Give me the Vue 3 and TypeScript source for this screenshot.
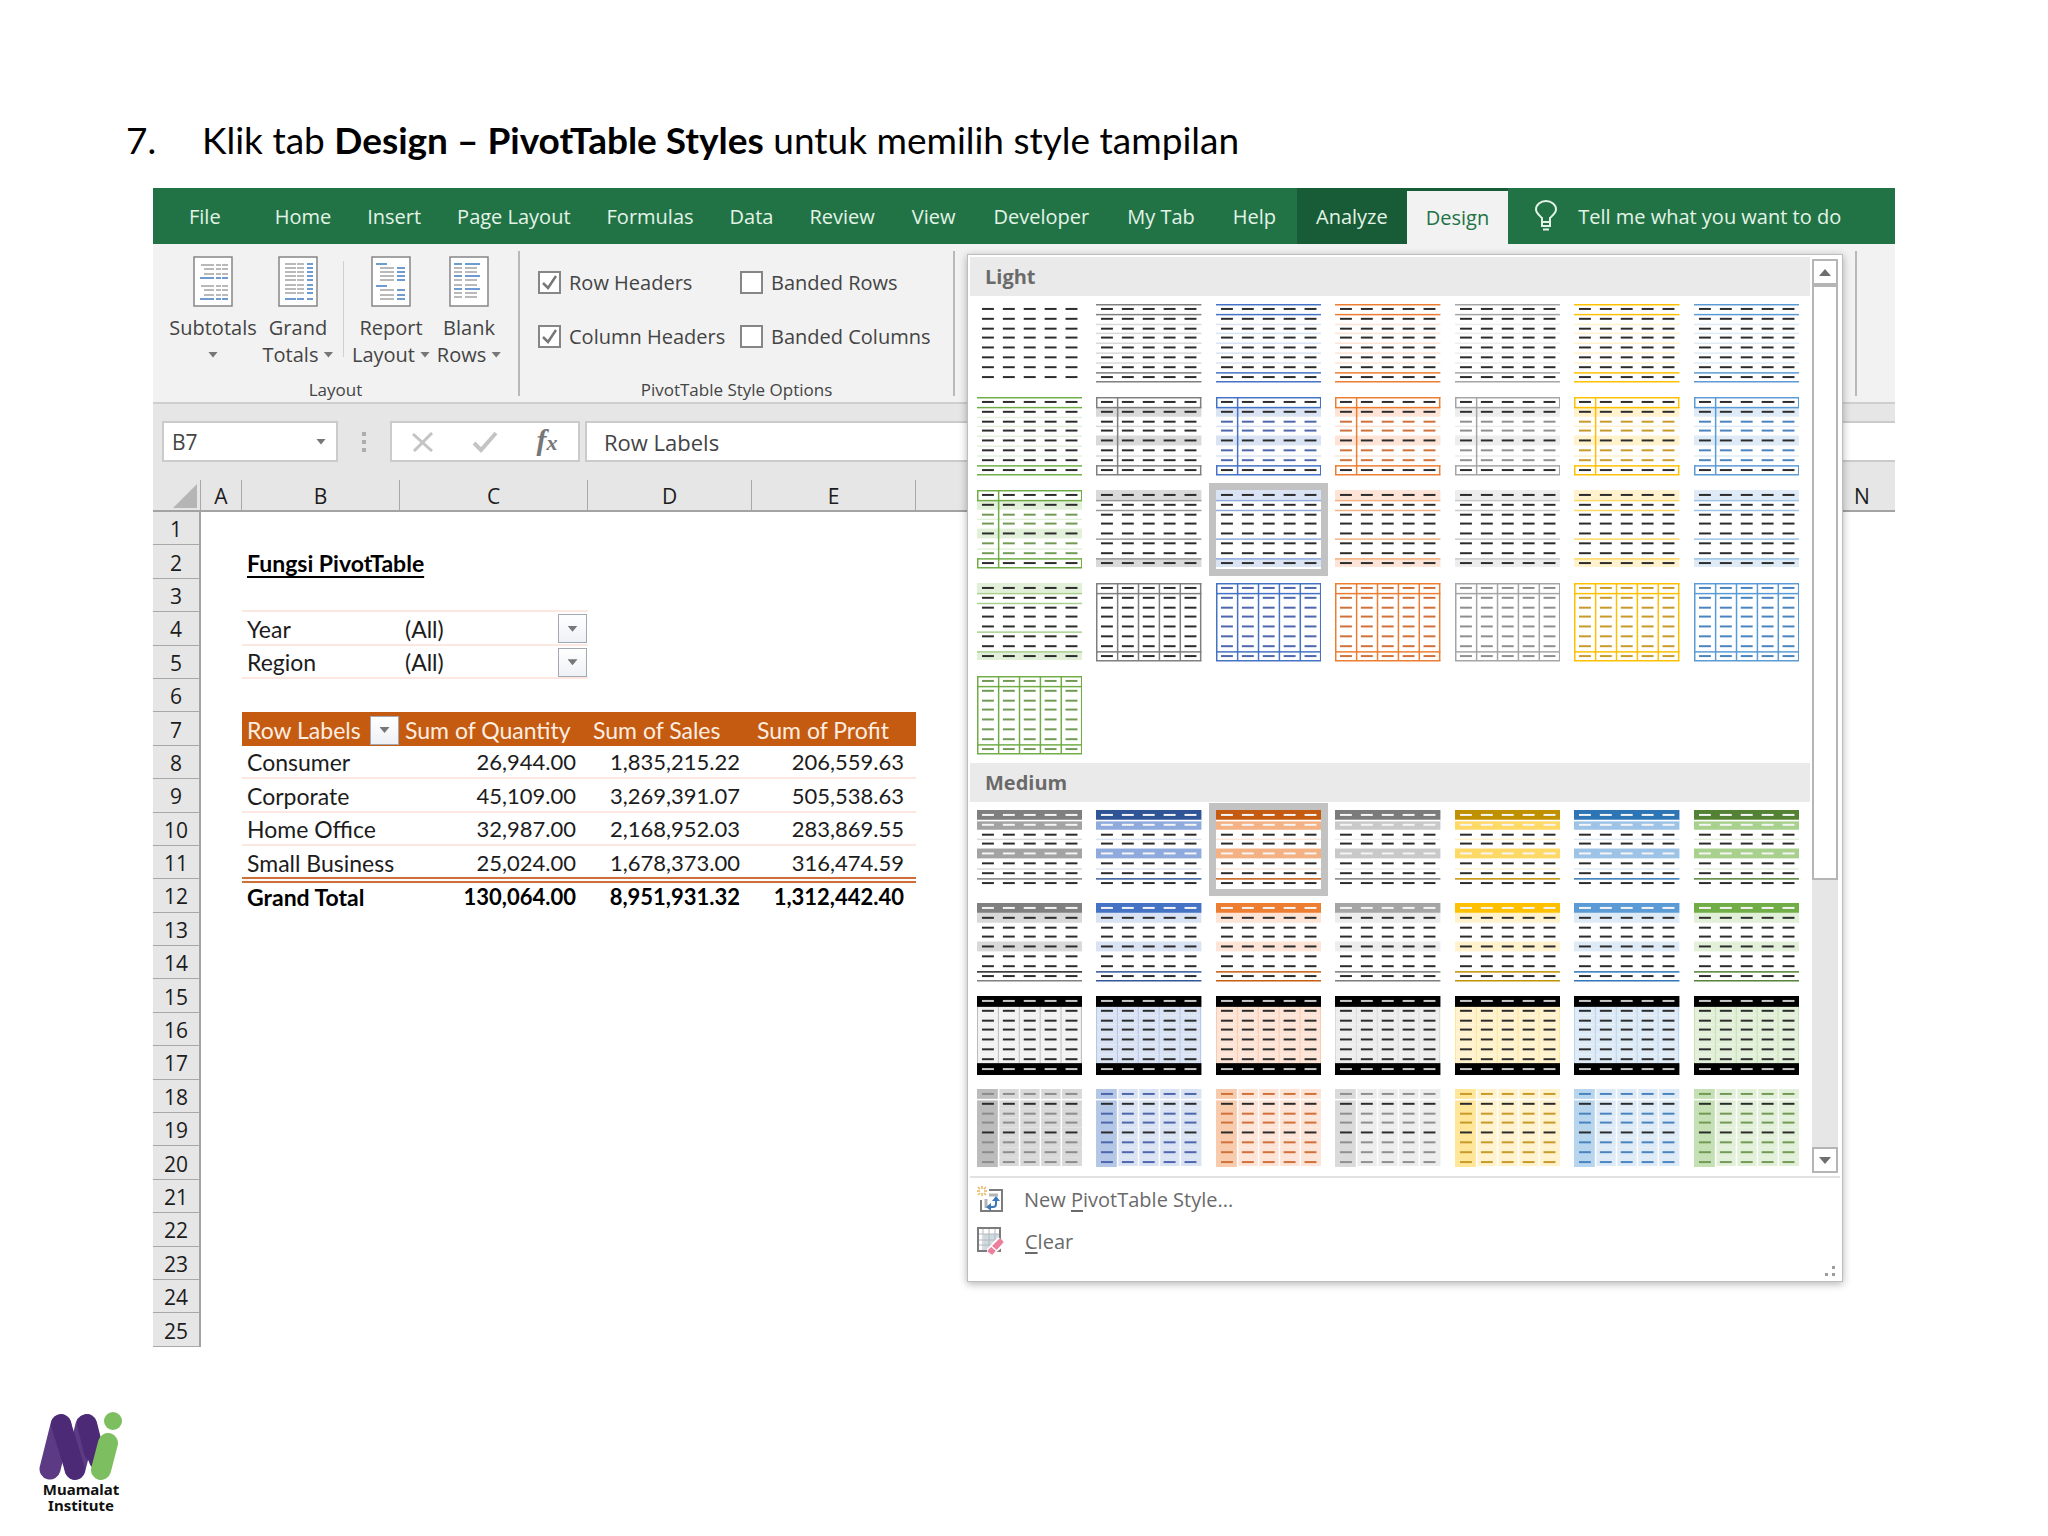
<script setup lang="ts">
import { ref } from 'vue'

interface Palette {
  name: string
  accent: string
  dark: string
  mid: string
  soft: string
  light: string
  dash: string
}
interface Shape {
  x: number
  y: number
  w: number
  h: number
  fill: string
}
type Kind = 'plain' | 'lines' | 'boxed' | 'edges' | 'grid' | 'banded' | 'header' | 'black' | 'columns'
interface Style {
  id: string
  label: string
  shapes: Shape[]
}

const INK = '#2b2b2b'
const palettes: Palette[] = [
  { name: 'Gray', accent: '#7f7f7f', dark: '#7f7f7f', mid: '#a3a3a3', soft: '#bcbcbc', light: '#d9d9d9', dash: INK },
  { name: 'Blue', accent: '#4472c4', dark: '#2f5597', mid: '#8faadc', soft: '#b4c7e7', light: '#dae3f3', dash: '#4d66ad' },
  { name: 'Orange', accent: '#ed7d31', dark: '#c55a11', mid: '#f4b183', soft: '#f8cbad', light: '#fde4d6', dash: '#d0713a' },
  { name: 'Silver', accent: '#a5a5a5', dark: '#7b7b7b', mid: '#c9c9c9', soft: '#dadada', light: '#ededed', dash: '#8f8f8f' },
  { name: 'Gold', accent: '#ffc000', dark: '#bf9000', mid: '#ffd966', soft: '#ffe699', light: '#fff2cc', dash: '#c79a2a' },
  { name: 'Sky', accent: '#5b9bd5', dark: '#2e75b6', mid: '#9dc3e6', soft: '#b8d5ee', light: '#deebf7', dash: '#4a84bf' },
  { name: 'Green', accent: '#70ad47', dark: '#548235', mid: '#a9d18e', soft: '#c5e0b4', light: '#e2f0d9', dash: '#729a55' },
]

const W = 106
const edge = (i: number) => Math.round(i * 9.8)
const col = (i: number) => Math.min(i * 21, W - 1.5)

function draw(kind: Kind, p: Palette): Shape[] {
  const out: Shape[] = []
  const gray = p.name === 'Gray'
  const band = (r: number, fill: string) => out.push({ x: 0, y: edge(r), w: W, h: edge(r + 1) - edge(r), fill })
  const line = (i: number, fill: string) => out.push({ x: 0, y: edge(i), w: W, h: 1.5, fill })
  const upright = (c: number, fill: string, from = 0, to = 8) =>
    out.push({ x: col(c), y: edge(from), w: 1.5, h: edge(to) - edge(from) + 1, fill })
  let ink = (_row: number) => INK
  const tinted = (row: number) => (row === 0 || row === 1 || row === 4 || row === 7 ? INK : p.dash)

  if (kind === 'lines') {
    for (let i = 2; i < 7; i++) line(i, p.light)
    for (const i of [0, 1, 7, 8]) line(i, p.accent)
  } else if (kind === 'boxed') {
    band(1, p.light)
    band(4, p.light)
    line(3, p.light)
    line(6, p.light)
    for (const i of [0, 1, 7, 8]) line(i, p.accent)
    upright(1, p.accent)
    for (const c of [0, 5]) {
      upright(c, p.accent, 0, 1)
      upright(c, p.accent, 7, 8)
    }
    ink = tinted
  } else if (kind === 'edges') {
    band(0, p.light)
    band(7, p.light)
    for (const i of [1, 2, 5, 7]) line(i, gray ? '#999999' : p.mid)
  } else if (kind === 'grid') {
    for (const i of [0, 1, 7, 8]) line(i, p.accent)
    for (let c = 0; c < 6; c++) upright(c, p.accent)
    ink = () => p.dash
  } else if (kind === 'banded') {
    band(0, p.dark)
    band(1, p.mid)
    band(4, p.mid)
    line(1, '#ffffff')
    line(3, p.light)
    line(6, p.light)
    line(7, p.dark)
    ink = (r) => (r === 0 || r === 1 || r === 4 ? '#f4f4f4' : INK)
  } else if (kind === 'header') {
    band(0, p.accent)
    band(1, p.light)
    band(4, p.light)
    line(7, gray ? '#222222' : p.dark)
    line(8, p.dark)
    ink = (r) => (r === 0 ? '#f4f4f4' : INK)
  } else if (kind === 'black') {
    const fill = gray ? '#f2f2f2' : p.light
    for (let r = 1; r < 7; r++) band(r, fill)
    for (let c = 0; c < 6; c++) out.push({ x: col(c), y: 11, w: 1, h: 57, fill: p.soft })
    out.push({ x: 0, y: 0, w: W, h: 11, fill: '#000000' }, { x: 0, y: 68, w: W, h: 12, fill: '#000000' })
    ink = (r) => (r === 0 || r === 7 ? '#c8c8c8' : INK)
  } else if (kind === 'columns') {
    for (let r = 0; r < 8; r++) band(r, p.light)
    out.push({ x: 0, y: 0, w: 21, h: 79, fill: p.soft })
    for (let c = 1; c < 5; c++) upright(c, '#ffffff')
    line(1, '#ffffff')
    ink = (r) => (r === 1 || r === 4 ? INK : gray ? '#8c8c8c' : p.dash)
  }

  for (let r = 0; r < 8; r++)
    for (let c = 0; c < 5; c++) out.push({ x: 5 + c * 21, y: edge(r) + 4, w: 12, h: 2, fill: ink(r) })
  return out
}

const family = (kind: Kind): Style[] =>
  palettes.map((p) => ({ id: `${kind}-${p.name}`, label: `${p.name} ${kind}`, shapes: draw(kind, p) }))

// "Light" starts with the plain style; every later family is shifted by one cell
const lightFamilies: Kind[] = ['lines', 'boxed', 'edges', 'grid']
const mediumFamilies: Kind[] = ['banded', 'header', 'black', 'columns']
const sections = [
  {
    title: 'Light',
    styles: [{ id: 'plain', label: 'None', shapes: draw('plain', palettes[0]) }, ...lightFamilies.flatMap(family)],
    current: 'edges-Blue',
  },
  { title: 'Medium', styles: mediumFamilies.flatMap(family), current: 'banded-Orange' },
]

const tabs = ['Home', 'Insert', 'Page Layout', 'Formulas', 'Data', 'Review', 'View', 'Developer', 'My Tab', 'Help']

// Page glyphs of the Layout group: [x, y, width, blue?]
type Dash = [number, number, number, boolean]
const subtotalRows: Dash[] = [8, 12, 17, 21, 29, 33, 38, 42].flatMap((y, i): Dash[] => {
  const blue = i % 4 === 3
  const x = blue ? 6 : i % 4 === 0 ? 7 : 10
  return [[x, y, 20 - x, blue], [22, y, 5, blue], [28, y, 6, blue]]
})
const grandRows: Dash[] = [7, 11, 15, 19, 23, 28, 32, 36, 42].flatMap((y, i): Dash[] => [
  [6, y, 11, i === 8],
  [18, y, 7, i === 8],
  [28, y, 6, true],
])
const reportRows: Dash[] = [
  [4, 7, 11, true],
  ...[11, 15, 19, 23].flatMap((y): Dash[] => [[8, y, 14, false], [25, y, 8, true]]),
  [4, 29, 11, true],
  ...[33, 38, 42].flatMap((y): Dash[] => [[8, y, 14, false], [25, y, 8, true]]),
]
const blankRows: Dash[] = [7, 11, 15, 19, 23, 28, 32, 36, 40].flatMap((y, i): Dash[] => [
  [4, y, 8, i % 3 === 0],
  [15, y, i % 3 === 0 ? 15 : 12, i % 3 === 0],
])
const layoutButtons = [
  { top: 'Subtotals', bottom: '', dashes: subtotalRows, size: 'w-sub' },
  { top: 'Grand', bottom: 'Totals', dashes: grandRows, size: 'w-grand' },
  { top: 'Report', bottom: 'Layout', dashes: reportRows, size: 'w-report' },
  { top: 'Blank', bottom: 'Rows', dashes: blankRows, size: 'w-blank' },
]

const options = ref([
  { label: 'Row Headers', on: true },
  { label: 'Banded Rows', on: false },
  { label: 'Column Headers', on: true },
  { label: 'Banded Columns', on: false },
])

const cellName = ref('B7')
const formula = ref('Row Labels')
const columns = ['A', 'B', 'C', 'D', 'E', 'F', 'G', 'H', 'I', 'J', 'K', 'L', 'M', 'N']
const cells: Record<number, string[]> = {
  2: ['Fungsi PivotTable', '', '', ''],
  4: ['Year', '(All)', '', ''],
  5: ['Region', '(All)', '', ''],
  7: ['Row Labels', 'Sum of Quantity', 'Sum of Sales', 'Sum of Profit'],
  8: ['Consumer', '26,944.00', '1,835,215.22', '206,559.63'],
  9: ['Corporate', '45,109.00', '3,269,391.07', '505,538.63'],
  10: ['Home Office', '32,987.00', '2,168,952.03', '283,869.55'],
  11: ['Small Business', '25,024.00', '1,678,373.00', '316,474.59'],
  12: ['Grand Total', '130,064.00', '8,951,931.32', '1,312,442.40'],
}
const blank = ['', '', '', '']
const hasFilter = (row: number, c: number) => ((row === 4 || row === 5) && c === 1) || (row === 7 && c === 0)
</script>

<template>
  <main class="slide">
    <h1 class="step"><span class="num">7.</span><span>Klik tab <b>Design – PivotTable Styles</b> untuk memilih style tampilan</span></h1>

    <section class="excel">
      <nav class="tabs">
        <button type="button" class="tab file">File</button>
        <button v-for="t in tabs" :key="t" type="button" class="tab">{{ t }}</button>
        <button type="button" class="tab analyze">Analyze</button>
        <button type="button" class="tab design">Design</button>
        <button type="button" class="tell">
          <svg width="24" height="32" viewBox="0 0 24 32" fill="none" stroke="#e3f3e6" stroke-width="2">
            <path d="M8 22v-4C5 15 2 13 2 9.500a10 8.500 0 0 1 20 0C22 13 19 15 16 18v4zM8 22v4h8v-4M9 29.500h6" />
          </svg>
          <span>Tell me what you want to do</span>
        </button>
      </nav>

      <div class="ribbon">
        <div class="group layout">
          <div class="big-row">
            <template v-for="(b, i) in layoutButtons" :key="b.top">
              <span v-if="i === 2" class="thin"></span>
              <button type="button" class="big" :class="b.size">
                <svg width="40" height="51" viewBox="0 0 40 51">
                  <rect x="1" y="1" width="38" height="49" fill="#fff" stroke="#868686" stroke-width="1.500" />
                  <rect v-for="(d, k) in b.dashes" :key="k" :x="d[0] + 1" :y="d[1]" :width="d[2]" height="2" :fill="d[3] ? '#6f9bd0' : '#b9b9b9'" />
                </svg>
                <span>{{ b.top }}</span>
                <span class="second">{{ b.bottom }}<i class="caret"></i></span>
              </button>
            </template>
          </div>
          <p class="caption">Layout</p>
        </div>
        <span class="rule"></span>
        <div class="group choices">
          <div class="checks">
            <label v-for="o in options" :key="o.label" class="check">
              <span class="box">
                <input v-model="o.on" type="checkbox" />
                <svg v-if="o.on" width="23" height="23" viewBox="0 0 23 23" fill="none" stroke="#777" stroke-width="2.500"><path d="M5 12l5 5 8-12" /></svg>
              </span>
              {{ o.label }}
            </label>
          </div>
          <p class="caption">PivotTable Style Options</p>
        </div>
        <span class="rule"></span>
        <span class="rule last"></span>
      </div>

      <div class="bar">
        <div class="field name">
          <input v-model="cellName" aria-label="Name box" />
          <i class="caret"></i>
        </div>
        <div class="grip"><i></i><i></i><i></i></div>
        <div class="field tools">
          <button type="button" aria-label="Cancel">
            <svg width="22" height="20" viewBox="0 0 22 20" stroke="#c4c4c4" stroke-width="3" fill="none"><path d="M1 2l19 17M20 1L2 19" /></svg>
          </button>
          <button type="button" aria-label="Enter">
            <svg width="26" height="22" viewBox="0 0 26 22" stroke="#c4c4c4" stroke-width="4" fill="none"><path d="M2 12l7 7L24 2" /></svg>
          </button>
          <button type="button" class="fx" aria-label="Insert function">f<small>x</small></button>
        </div>
        <input v-model="formula" class="field formula" aria-label="Formula" />
      </div>

      <table class="sheet">
        <colgroup>
          <col class="c-head" /><col class="c-a" /><col class="c-b" /><col class="c-c" /><col class="c-d" /><col class="c-d" />
          <col v-for="n in 8" :key="n" /><col class="c-n" />
        </colgroup>
        <thead>
          <tr>
            <th class="corner"><svg width="24" height="24" viewBox="0 0 24 24"><path d="M24 0v24H0z" fill="#b5b5b5" /></svg></th>
            <th v-for="c in columns" :key="c">{{ c }}</th>
          </tr>
        </thead>
        <tbody>
          <tr v-for="r in 25" :key="r" :class="'r' + r">
            <th>{{ r }}</th>
            <td></td>
            <td v-for="(v, c) in cells[r] ?? blank" :key="c" :class="['cell', 'k' + c]">
              <div class="inner">
                <span>{{ v }}</span>
                <button v-if="hasFilter(r, c)" type="button" class="filter" :aria-label="'Filter ' + v"><i class="caret"></i></button>
              </div>
            </td>
            <td colspan="9"></td>
          </tr>
        </tbody>
      </table>

      <aside class="panel">
        <div class="scroller">
          <div class="gallery">
            <section v-for="s in sections" :key="s.title">
              <h2>{{ s.title }}</h2>
              <div class="thumbs">
                <button v-for="t in s.styles" :key="t.id" type="button" class="thumb" :class="{ current: t.id === s.current }" :aria-label="t.label">
                  <svg viewBox="0 0 106 80" preserveAspectRatio="none">
                    <rect width="106" height="80" fill="#fff" />
                    <rect v-for="(q, k) in t.shapes" :key="k" :x="q.x" :y="q.y" :width="q.w" :height="q.h" :fill="q.fill" />
                  </svg>
                </button>
              </div>
            </section>
          </div>
          <div class="scrollbar">
            <button type="button" aria-label="Scroll up"><svg width="12" height="7" viewBox="0 0 12 7"><path d="M0 7l6-7 6 7z" fill="#6e6e6e" /></svg></button>
            <div class="track"><div class="knob"></div></div>
            <button type="button" aria-label="Scroll down"><svg width="12" height="7" viewBox="0 0 12 7"><path d="M0 0l6 7 6-7z" fill="#6e6e6e" /></svg></button>
          </div>
        </div>
        <div class="menu">
          <button type="button">
            <svg width="26" height="26" viewBox="0 0 26 26" fill="none">
              <path d="M12 4h13v21H4V14" stroke="#7c7c7c" stroke-width="2" />
              <path d="M12 9h9M9 13v9" stroke="#b5b5b5" stroke-width="3" />
              <path d="M19 12v6q0 3-3 3h-5" stroke="#3d78b8" stroke-width="2" />
              <path d="M15 15l4-5 4 5zM14 17l-5 4 5 4z" fill="#3d78b8" />
              <path d="M5 0v3M5 7v3M0 5h3M7 5h3M1 1l2 2M9 1L7 3M1 9l2-2M9 9L7 7" stroke="#e9b65a" stroke-width="1.500" />
            </svg>
            <span>New <u>P</u>ivotTable Style...</span>
          </button>
          <button type="button">
            <svg width="27" height="28" viewBox="0 0 27 28" fill="none">
              <path d="M7 7h16v16H7z" fill="#cfdae0" />
              <path d="M1 7h22M1 13h22M1 18h22M6 1v23M12 1v23M18 1v23" stroke="#b4babd" />
              <path d="M1 1h22v23H1z" stroke="#7c7c7c" stroke-width="2" />
              <path d="M10 22L21 10l6 5v4L16 28h-6z" fill="#fff" />
              <path d="M11 23L22 12q1-1 2 0l2 2q1 1 0 2L16 27q-1 1-2 0l-3-2q-1-1 0-2z" fill="#ec7f9b" />
              <path d="M14 19l6 5" stroke="#fff" stroke-width="1.500" />
            </svg>
            <span><u>C</u>lear</span>
          </button>
          <svg class="sizer" width="12" height="12" viewBox="0 0 12 12" fill="#9c9c9c"><path d="M8 1h3v3H8zM8 8h3v3H8zM1 8h3v3H1z" /></svg>
        </div>
      </aside>
    </section>

    <footer class="logo">
      <svg width="84" height="69" viewBox="0 0 84 69" fill="none" stroke-linecap="round">
        <path d="M11 57L22 13" stroke="#5c3a84" stroke-width="21" />
        <path d="M36 57L47 13" stroke="#5c3a84" stroke-width="21" />
        <path d="M22 12l14 46" stroke="#4d2a75" stroke-width="20" />
        <path d="M48 12l7 28" stroke="#4d2a75" stroke-width="20" />
        <path d="M50 42l4 10" stroke="#4d2a75" stroke-width="6" />
        <path d="M62 58L69 31" stroke="#7dbf60" stroke-width="20" />
        <circle cx="74" cy="9" r="9" fill="#7dbf60" />
      </svg>
      <p><span>Muamalat</span><span>Institute</span></p>
    </footer>
  </main>
</template>

<style>
body {
  margin: 0;
  background: #fff;
}
</style>

<style scoped>
* {
  box-sizing: border-box;
}
.slide {
  font-family: 'Open Sans', 'Noto Sans', sans-serif;
  font-size: 20px;
  color: #444;
}
button,
input {
  font: inherit;
  color: inherit;
  background: none;
  border: 0;
  padding: 0;
  margin: 0;
}
h1,
h2,
p {
  margin: 0;
}
.step {
  display: flex;
  padding: 116px 126px 24px;
  font: 400 37px/48px Lato, Carlito, sans-serif;
  color: #000;
}
.num {
  flex: none;
  width: 76px;
}
.excel {
  position: relative;
  margin: 0 153px;
}

/* tabs */
.tabs {
  display: flex;
  height: 56px;
  background: #217346;
  color: #e3f3e6;
}
.tab {
  padding: 0 18px;
  white-space: nowrap;
}
.tab:nth-child(n + 8) {
  padding: 0 19px;
}
.file {
  padding: 0 36px;
}
.analyze {
  margin-left: 2px;
  background: #185c37;
}
.design {
  background: #f2f2f2;
  color: #217346;
  border-top: 3px solid #185c37;
}
.tell {
  display: flex;
  align-items: center;
  gap: 20px;
  padding: 0 26px;
  white-space: nowrap;
}

/* ribbon */
.ribbon {
  display: flex;
  height: 160px;
  background: #f2f2f2;
  border-bottom: 2px solid #cfcfcf;
}
.group {
  display: flex;
  flex-direction: column;
  justify-content: space-between;
  padding-top: 12px;
}
.layout {
  width: 365px;
}
.choices {
  width: 433px;
}
.big-row {
  display: flex;
  padding-left: 16px;
}
.big {
  display: flex;
  flex-direction: column;
  align-items: center;
  line-height: 27px;
  white-space: nowrap;
}
.big svg {
  margin-bottom: 7px;
}
.w-sub {
  width: 88px;
}
.w-grand {
  width: 82px;
}
.w-report {
  width: 86px;
}
.w-blank {
  width: 70px;
}
.second {
  display: flex;
  align-items: center;
  gap: 5px;
  height: 27px;
}
.caret {
  display: block;
  width: 10px;
  height: 6px;
  background: #777;
  clip-path: polygon(0 0, 100% 0, 50% 100%);
}
.thin {
  width: 1px;
  height: 96px;
  margin: 5px 4px 0;
  background: #d0d0d0;
}
.caption {
  font-size: 17px;
  line-height: 24px;
  text-align: center;
}
.rule {
  width: 2px;
  height: 145px;
  margin-top: 7px;
  background: #b9b9b9;
}
.last {
  margin-left: auto;
  margin-right: 38px;
}
.checks {
  display: grid;
  grid-template-columns: 202px 1fr;
  grid-auto-rows: 54px;
  padding-left: 18px;
}
.check {
  display: flex;
  align-items: center;
  align-self: start;
  gap: 8px;
  height: 52px;
  white-space: nowrap;
}
.box {
  position: relative;
  width: 23px;
  height: 23px;
}
.box input {
  appearance: none;
  display: block;
  width: 23px;
  height: 23px;
  background: #fff;
  border: 2px solid #868686;
}
.box svg {
  position: absolute;
  inset: 0;
  pointer-events: none;
}

/* formula bar */
.bar {
  display: flex;
  align-items: flex-start;
  height: 76px;
  padding: 17px 0 0 9px;
  background: #e6e6e6;
}
.field {
  height: 41px;
  background: #fff;
  border: 2px solid #cbcbcb;
}
.name {
  display: flex;
  align-items: center;
  width: 176px;
  padding: 0 10px 0 8px;
  font-size: 21px;
}
.name input {
  flex: 1;
  min-width: 0;
}
.grip {
  display: flex;
  flex-direction: column;
  align-items: center;
  justify-content: center;
  gap: 4px;
  width: 52px;
  height: 41px;
}
.grip i {
  width: 4px;
  height: 4px;
  background: #adadad;
}
.tools {
  display: grid;
  grid-template-columns: repeat(3, 1fr);
  align-items: center;
  width: 190px;
  margin-right: 5px;
}
.tools button {
  height: 37px;
}
.tools svg {
  display: block;
  margin: 0 auto;
}
.tools .fx {
  font: italic 700 30px/30px 'Liberation Serif', serif;
  color: #777;
}
.fx small {
  font-size: 22px;
}
.formula {
  flex: 1;
  min-width: 0;
  padding: 0 17px;
  border-right: 0;
  font-size: 22px;
}

/* sheet */
.sheet {
  width: 100%;
  height: 867px;
  table-layout: fixed;
  border-collapse: separate;
  border-spacing: 0;
  font-family: Lato, Carlito, sans-serif;
  font-size: 23px;
  line-height: 28px;
  color: #1c1c1c;
}
.c-head {
  width: 48px;
}
.c-a {
  width: 41px;
}
.c-b {
  width: 158px;
}
.c-c {
  width: 188px;
}
.c-d {
  width: 164px;
}
.c-n {
  width: 66px;
}
th,
td {
  padding: 0;
}
tbody tr {
  height: 33px;
}
th {
  padding-top: 2px;
  font: 400 21px/28px 'Open Sans', 'Noto Sans', sans-serif;
  background: #e6e6e6;
  border-right: 1px solid #a8a8a8;
  border-bottom: 1px solid #a8a8a8;
}
thead th {
  height: 32px;
  border-bottom: 2px solid #a3a3a3;
}
thead th:last-child {
  border-right: 0;
}
tbody th {
  border-right: 2px solid #a3a3a3;
}
.corner svg {
  display: block;
  margin-left: 20px;
}
.cell {
  padding-top: 2px;
}
.inner {
  display: flex;
  align-items: center;
  justify-content: space-between;
  height: 29px;
  padding-left: 5px;
  white-space: nowrap;
}
.filter {
  display: flex;
  align-items: center;
  justify-content: center;
  width: 29px;
  height: 29px;
  margin-right: 1px;
  background: linear-gradient(#fff, #eef1f6);
  border: 1px solid #a2a9b3;
}
.r2 .k0 {
  font-weight: 700;
  text-decoration: underline;
  text-decoration-thickness: 2px;
  text-underline-offset: 4px;
  color: #000;
}
.r3 .k0,
.r3 .k1,
.r4 .k0,
.r4 .k1,
.r5 .k0,
.r5 .k1,
.r8 .cell,
.r9 .cell,
.r10 .cell {
  border-bottom: 2px solid #fce8e0;
}
.r7 .cell {
  background: #c55a11;
  color: #fdeee2;
}
/* the total row is set off by a double rule that straddles the row edge */
.r11 .cell {
  border-bottom: 2px solid #cf6f38;
}
.r12 .cell {
  font-weight: 700;
  color: #000;
  background: linear-gradient(#cf6f38, #cf6f38) 0 2px / 100% 2px no-repeat;
}
:is(.r8, .r9, .r10, .r11, .r12) :is(.k1, .k2, .k3) .inner {
  justify-content: flex-end;
  padding-right: 12px;
  font-size: 22px;
}

/* style gallery */
.panel {
  position: absolute;
  top: 66px;
  right: 52px;
  width: 876px;
  padding: 2px;
  background: #fff;
  border: 1px solid #bdbdbd;
  box-shadow: 0 2px 8px rgba(0, 0, 0, 0.3);
  color: #6a6a6a;
}
.scroller {
  display: flex;
  gap: 2px;
  border-bottom: 2px solid #e2e2e2;
}
.gallery {
  flex: 1;
}
h2 {
  padding-left: 15px;
  font-size: 20px;
  line-height: 39px;
  font-weight: 700;
  background: #eaeaea;
}
.thumbs {
  display: grid;
  grid-template-columns: repeat(7, 1fr);
  grid-auto-rows: 93px;
  padding: 1px 4px 1px 0;
}
.thumb {
  border: 7px solid transparent;
}
.thumb svg {
  display: block;
  width: 100%;
  height: 100%;
}
.current {
  border-color: #c2c2c2;
}
.scrollbar {
  display: flex;
  flex-direction: column;
  width: 26px;
  margin: 2px 2px 3px 0;
}
.scrollbar button {
  display: flex;
  align-items: center;
  justify-content: center;
  height: 26px;
  background: #fff;
  border: 2px solid #b5b5b5;
}
.track {
  flex: 1;
  background: #e6e6e6;
}
.knob {
  height: 69%;
  background: #fff;
  border: 2px solid #b5b5b5;
}
.menu {
  position: relative;
  padding-bottom: 17px;
}
.menu button {
  display: flex;
  align-items: center;
  gap: 21px;
  width: 100%;
  height: 42px;
  padding-left: 7px;
  text-align: left;
}
.menu u {
  text-underline-offset: 3px;
}
.sizer {
  position: absolute;
  right: 4px;
  bottom: 2px;
}

/* logo */
.logo {
  width: 84px;
  margin: 65px 0 0 39px;
  text-align: center;
}
.logo svg {
  display: block;
}
.logo p {
  display: flex;
  flex-direction: column;
  font: 700 15px/16px 'Noto Sans', 'Open Sans', sans-serif;
  color: #111;
}
</style>
